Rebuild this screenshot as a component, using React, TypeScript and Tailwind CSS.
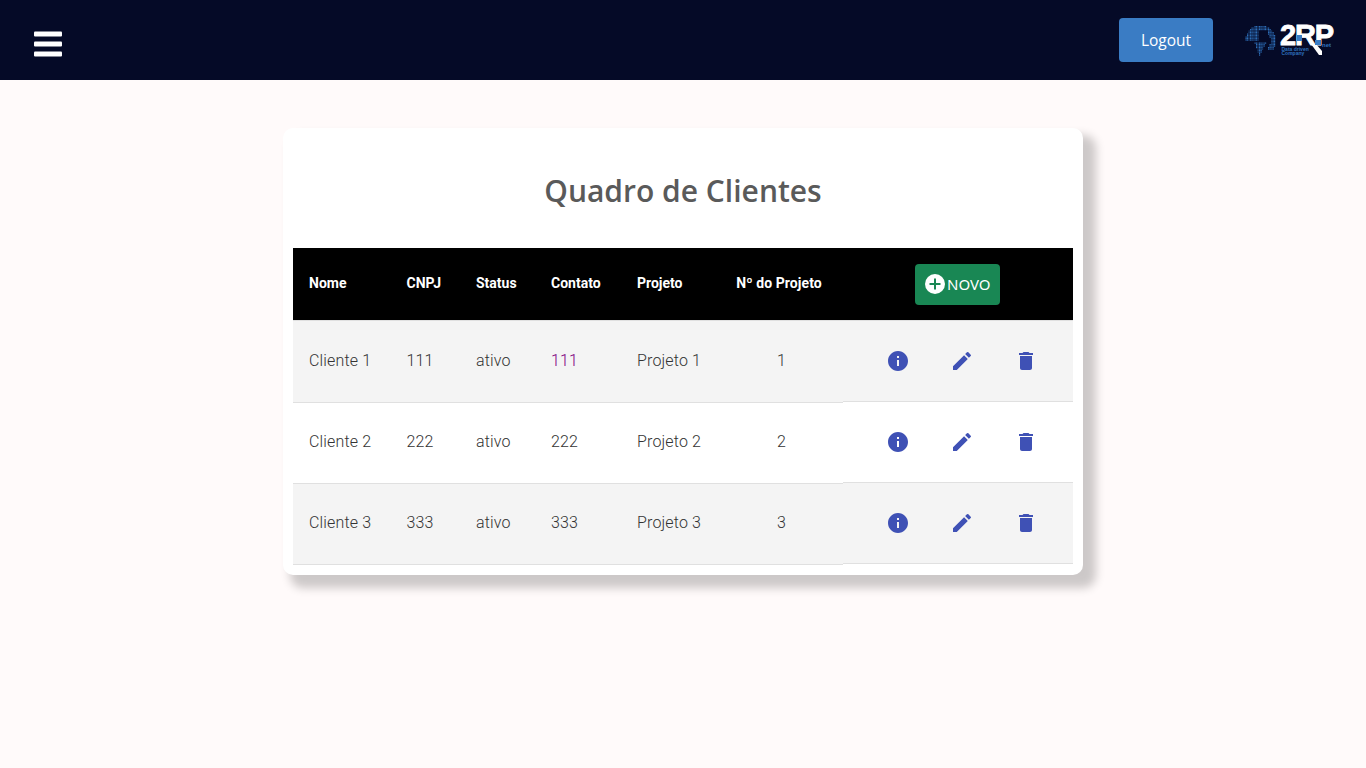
const rows = [
  ["Cliente 1", "111", "ativo", "111", "Projeto 1", "1"],
  ["Cliente 2", "222", "ativo", "222", "Projeto 2", "2"],
  ["Cliente 3", "333", "ativo", "333", "Projeto 3", "3"],
];

function globeDots() {
  const out: [number, number, number][] = [];
  let n = 0;
  for (let y = 0.5; y < 33; y += 1.5) {
    for (let x = 0.5; x < 31; x += 1.5) {
      n += 1;
      const d = Math.hypot(x - 15, y - 16);
      if (d > 15.2) continue;
      const northAmerica = x < 14 && y > 3 && y < 16 && x + y > 8 && x - y < 9;
      const topArc = y < 6 && x > 8 && x < 25;
      const crescent = d > 10 && x > 22 && y > 6 && y < 25;
      const southAmerica =
        y > 18 && y < 31 && x > 9 + (y - 18) * 0.35 && x < 21 - (y - 18) * 0.5;
      if (northAmerica || topArc || crescent || southAmerica) {
        out.push([x, y, n % 3 === 0 ? 0.55 : 0.95]);
      }
    }
  }
  return out;
}

function Logo() {
  const dots = globeDots();
  return (
    <svg width="90" height="34" viewBox="0 0 90 34" className="mt-[2px] shrink-0 overflow-visible">
      {dots.map(([x, y, o], i) => (
        <rect key={i} x={x} y={y} width="1.2" height="1.2" fill="#2f72bd" opacity={o} />
      ))}
      <text
        x="35"
        y="21"
        fontFamily="'Liberation Sans', sans-serif"
        fontWeight="700"
        fontSize="29"
        letterSpacing="-1.2"
        fill="#fff"
        stroke="#fff"
        strokeWidth="0.8"
      >
        2RP
      </text>
      <path d="M66 20h5l6 7v4h-3z" fill="#fff" />
      <rect x="52" y="11" width="5" height="6" fill="#3a7cc4" />
      <rect x="70" y="16" width="6" height="5" fill="#3a7cc4" />
      <text x="77" y="22.5" fontFamily="'Liberation Sans', sans-serif" fontWeight="700" fontSize="6" fill="#2f72bd">
        net
      </text>
      <text x="36.5" y="26.6" fontFamily="'Liberation Sans', sans-serif" fontWeight="700" fontSize="5" fill="#2f72bd">
        Data driven
      </text>
      <text x="36.5" y="30.8" fontFamily="'Liberation Sans', sans-serif" fontWeight="700" fontSize="5" fill="#2f72bd">
        Company
      </text>
    </svg>
  );
}

function InfoIcon() {
  return (
    <svg width="24" height="24" viewBox="0 0 24 24" fill="#3f51b5">
      <path d="M12 2C6.48 2 2 6.48 2 12s4.48 10 10 10 10-4.48 10-10S17.52 2 12 2zm1 15h-2v-6h2v6zm0-8h-2V7h2v2z" />
    </svg>
  );
}
function EditIcon() {
  return (
    <svg width="24" height="24" viewBox="0 0 24 24" fill="#3f51b5">
      <path d="M3 17.25V21h3.75L17.81 9.94l-3.75-3.75L3 17.25zM20.71 7.04a.996.996 0 0 0 0-1.41l-2.34-2.34a.996.996 0 0 0-1.41 0l-1.83 1.83 3.75 3.75 1.83-1.83z" />
    </svg>
  );
}
function TrashIcon() {
  return (
    <svg width="24" height="24" viewBox="0 0 24 24" fill="#3f51b5">
      <path d="M6 19c0 1.1.9 2 2 2h8c1.1 0 2-.9 2-2V7H6v12zM19 4h-3.5l-1-1h-5l-1 1H5v2h14V4z" />
    </svg>
  );
}

export default function App() {
  return (
    <div className="min-h-[768px] bg-[#fffafa] [font-family:Roboto,sans-serif]">
      <header className="h-[80px] bg-[#050a27] flex items-center justify-between pl-[34px] pr-[31px]">
        <svg width="28" height="26" viewBox="0 0 28 26" fill="#fff" className="mt-[8px]">
          <rect x="0" y="0.6" width="28" height="5" rx="1" />
          <rect x="0" y="10.6" width="28" height="5" rx="1" />
          <rect x="0" y="20.6" width="28" height="5" rx="1" />
        </svg>
        <div className="flex items-center gap-[32px]">
          <button className="w-[94px] h-[44px] pt-[2px] rounded-[4px] bg-[#3a7cc4] text-white text-[15.5px] [font-family:'Open_Sans',sans-serif]">
            Logout
          </button>
          <Logo />
        </div>
      </header>
      <main className="flex justify-center pt-[48px]">
        <section className="w-[800px] bg-white rounded-[10px] px-[10px] pb-[10px] shadow-[10px_10px_10px_3px_rgba(0,0,0,0.2)]">
          <h1 className="h-[120px] flex items-center justify-center pt-[4px] text-[30px] font-semibold text-[#5a5a5a] [font-family:'Open_Sans',sans-serif]">
            Quadro de Clientes
          </h1>
          <div className="flex items-start text-[#333]">
            <table className="w-[550px] table-fixed border-separate border-spacing-0">
              <colgroup>
                <col className="w-[97.5px]" />
                <col className="w-[69.5px]" />
                <col className="w-[75px]" />
                <col className="w-[86px]" />
                <col className="w-[99px]" />
                <col className="w-[123px]" />
              </colgroup>
              <thead>
                <tr className="bg-black text-white text-[14px] h-[73px]">
                  {["Nome", "CNPJ", "Status", "Contato", "Projeto"].map((h) => (
                    <th key={h} className="pl-[16px] pb-[2px] text-left font-bold border-b border-[#e0e0e0]">
                      {h}
                    </th>
                  ))}
                  <th className="pr-[5px] pb-[2px] text-center font-bold tracking-[0.08px] border-b border-[#e0e0e0]">
                    Nº do Projeto
                  </th>
                </tr>
              </thead>
              <tbody className="text-[16px] font-light tracking-[0.16px]">
                {rows.map((r, i) => (
                  <tr key={r[0]} className={i % 2 === 0 ? "bg-[#f4f4f4]" : "bg-white"}>
                    {r.map((c, j) => (
                      <td
                        key={j}
                        className={`${i === 0 ? "h-[82px]" : "h-[81px]"} pb-[2px] border-b border-[#e0e0e0] ${j === 5 ? "text-center" : "pl-[16px]"} ${i === 0 && j === 3 ? "text-[#800080]" : ""}`}
                      >
                        {c}
                      </td>
                    ))}
                  </tr>
                ))}
              </tbody>
            </table>
            <table className="w-[230px] table-fixed border-separate border-spacing-0">
              <thead>
                <tr className="bg-black h-[73px]">
                  <th className="border-b border-[#e0e0e0]">
                    <div className="flex pl-[72px]">
                      <button className="w-[85px] h-[41px] rounded-[4px] bg-[#198754] flex items-center pl-[10px] gap-[2px] text-white text-[15px] font-normal [font-family:'Noto_Sans',sans-serif]">
                        <svg width="20" height="20" viewBox="0 0 20 20">
                          <circle cx="10" cy="10" r="10" fill="#fff" />
                          <path d="M9 4.5h2V9h4.5v2H11v4.5H9V11H4.5V9H9z" fill="#198754" />
                        </svg>
                        NOVO
                      </button>
                    </div>
                  </th>
                </tr>
              </thead>
              <tbody>
                {rows.map((r, i) => (
                  <tr key={r[0]} className={i % 2 === 0 ? "bg-[#f4f4f4]" : "bg-white"}>
                    <td className="h-[81px] border-b border-[#e0e0e0]">
                      <div className="flex items-center pl-[43px] gap-[40px]">
                        <InfoIcon />
                        <EditIcon />
                        <TrashIcon />
                      </div>
                    </td>
                  </tr>
                ))}
              </tbody>
            </table>
          </div>
        </section>
      </main>
    </div>
  );
}
